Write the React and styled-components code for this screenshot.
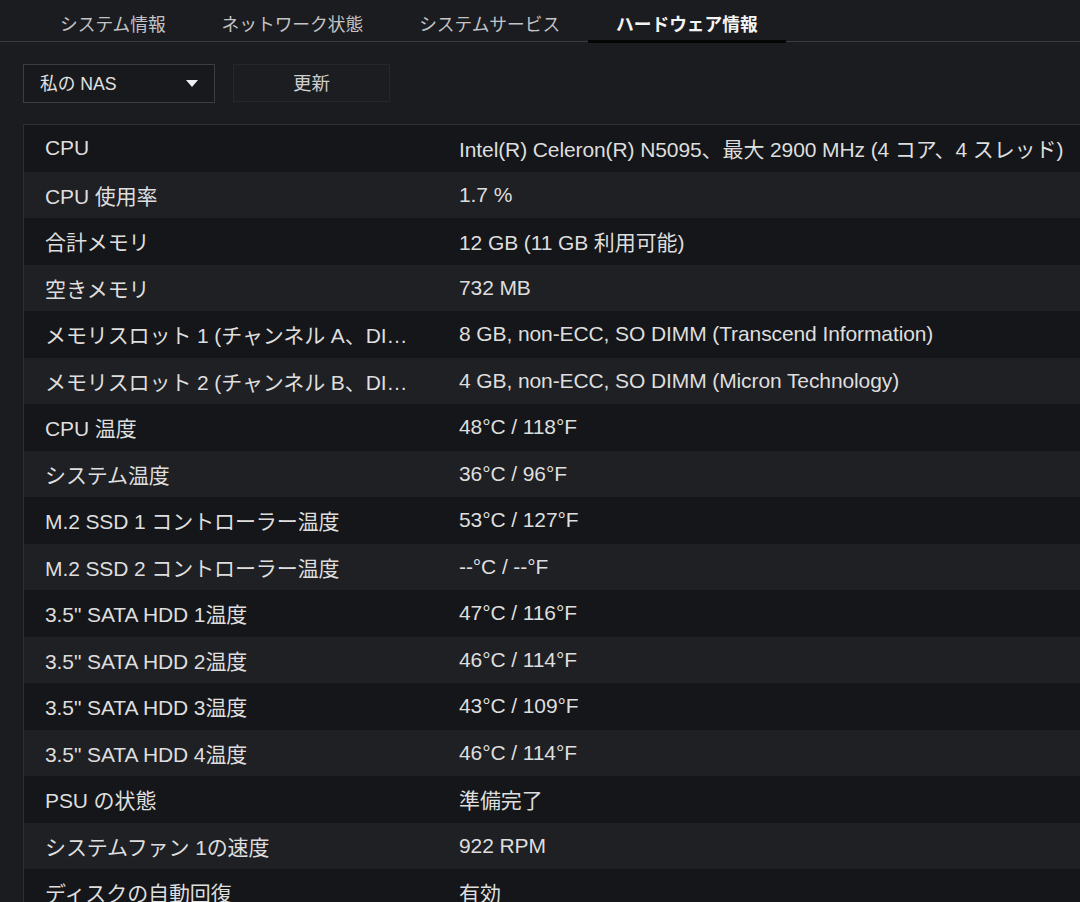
import React from 'react';
import styled, { createGlobalStyle } from 'styled-components';

const GlobalStyle = createGlobalStyle`
  html, body {
    margin: 0;
    padding: 0;
    background: #1b1c20;
    overflow: hidden;
  }
  body {
    font-family: "Liberation Sans", "Noto Sans CJK JP", sans-serif;
    color: #dcdcdc;
  }
`;

const tabs = ['システム情報', 'ネットワーク状態', 'システムサービス', 'ハードウェア情報'];

const rows = [
  ['CPU', 'Intel(R) Celeron(R) N5095、最大 2900 MHz (4 コア、4 スレッド)'],
  ['CPU 使用率', '1.7 %'],
  ['合計メモリ', '12 GB (11 GB 利用可能)'],
  ['空きメモリ', '732 MB'],
  ['メモリスロット 1 (チャンネル A、DIMM 0)', '8 GB, non-ECC, SO DIMM (Transcend Information)'],
  ['メモリスロット 2 (チャンネル B、DIMM 0)', '4 GB, non-ECC, SO DIMM (Micron Technology)'],
  ['CPU 温度', '48°C / 118°F'],
  ['システム温度', '36°C / 96°F'],
  ['M.2 SSD 1 コントローラー温度', '53°C / 127°F'],
  ['M.2 SSD 2 コントローラー温度', '--°C / --°F'],
  ['3.5" SATA HDD 1温度', '47°C / 116°F'],
  ['3.5" SATA HDD 2温度', '46°C / 114°F'],
  ['3.5" SATA HDD 3温度', '43°C / 109°F'],
  ['3.5" SATA HDD 4温度', '46°C / 114°F'],
  ['PSU の状態', '準備完了'],
  ['システムファン 1の速度', '922 RPM'],
  ['ディスクの自動回復', '有効'],
];

const App = () => {
  return (
    <Page>
      <GlobalStyle />
      <TabBar>
        {tabs.map((t, i) => (
          <Tab key={t} active={i === 3}>{t}</Tab>
        ))}
      </TabBar>
      <Toolbar>
        <Select>
          <span>私の NAS</span>
          <Caret />
        </Select>
        <RefreshButton>更新</RefreshButton>
      </Toolbar>
      <Table>
        {rows.map(([label, value], i) => (
          <Row key={label} odd={i % 2 === 0}>
            <Label>{label}</Label>
            <Value>{value}</Value>
          </Row>
        ))}
      </Table>
    </Page>
  );
};

const Page = styled.div`
  width: 1080px;
  height: 902px;
  overflow: hidden;
`;

const TabBar = styled.div`
  display: flex;
  height: 41px;
  padding-left: 32px;
  border-bottom: 1px solid #3a3b3f;
`;

const Tab = styled.div`
  display: flex;
  align-items: center;
  padding: 5px 28px 0;
  font-size: 17.7px;
  color: ${({ active }) => (active ? '#f4f4f4' : '#c4c4c6')};
  font-weight: ${({ active }) => (active ? 700 : 400)};
  border-bottom: 3px solid ${({ active }) => (active ? '#050506' : 'transparent')};
  margin-bottom: -2px;
`;

const Toolbar = styled.div`
  display: flex;
  gap: 18px;
  padding: 22px 0 0 23px;
`;

const Select = styled.div`
  box-sizing: border-box;
  width: 192px;
  height: 39px;
  display: flex;
  align-items: center;
  justify-content: space-between;
  padding: 0 16px 3px 16px;
  border: 1px solid #3c3d41;
  background: #18191d;
  font-size: 17.7px;
  color: #e2e2e2;
`;

const Caret = styled.span`
  width: 0;
  height: 0;
  margin-top: 3px;
  border-left: 6px solid transparent;
  border-right: 6px solid transparent;
  border-top: 7px solid #f0f0f0;
`;

const RefreshButton = styled.div`
  box-sizing: border-box;
  width: 157px;
  height: 38px;
  display: flex;
  align-items: center;
  justify-content: center;
  padding-bottom: 3px;
  border: 1px solid #26272b;
  background: #1c1d21;
  font-size: 18.5px;
  color: #cfcfcf;
`;

const Table = styled.div`
  margin: 21px -20px 0 23px;
  border: 1px solid #2e2f33;
  border-right: none;
`;

const Row = styled.div`
  display: grid;
  grid-template-columns: 435px 1fr;
  align-items: center;
  height: 46.5px;
  background: ${({ odd }) => (odd ? '#151619' : '#1f2024')};
  font-size: 21px;
  letter-spacing: -0.1px;
`;

const Label = styled.div`
  padding: 0 46px 0 21px;
  white-space: nowrap;
  overflow: hidden;
  text-overflow: ellipsis;
  color: #dedede;
`;

const Value = styled.div`
  white-space: nowrap;
  color: #dedede;
`;

export default App;
